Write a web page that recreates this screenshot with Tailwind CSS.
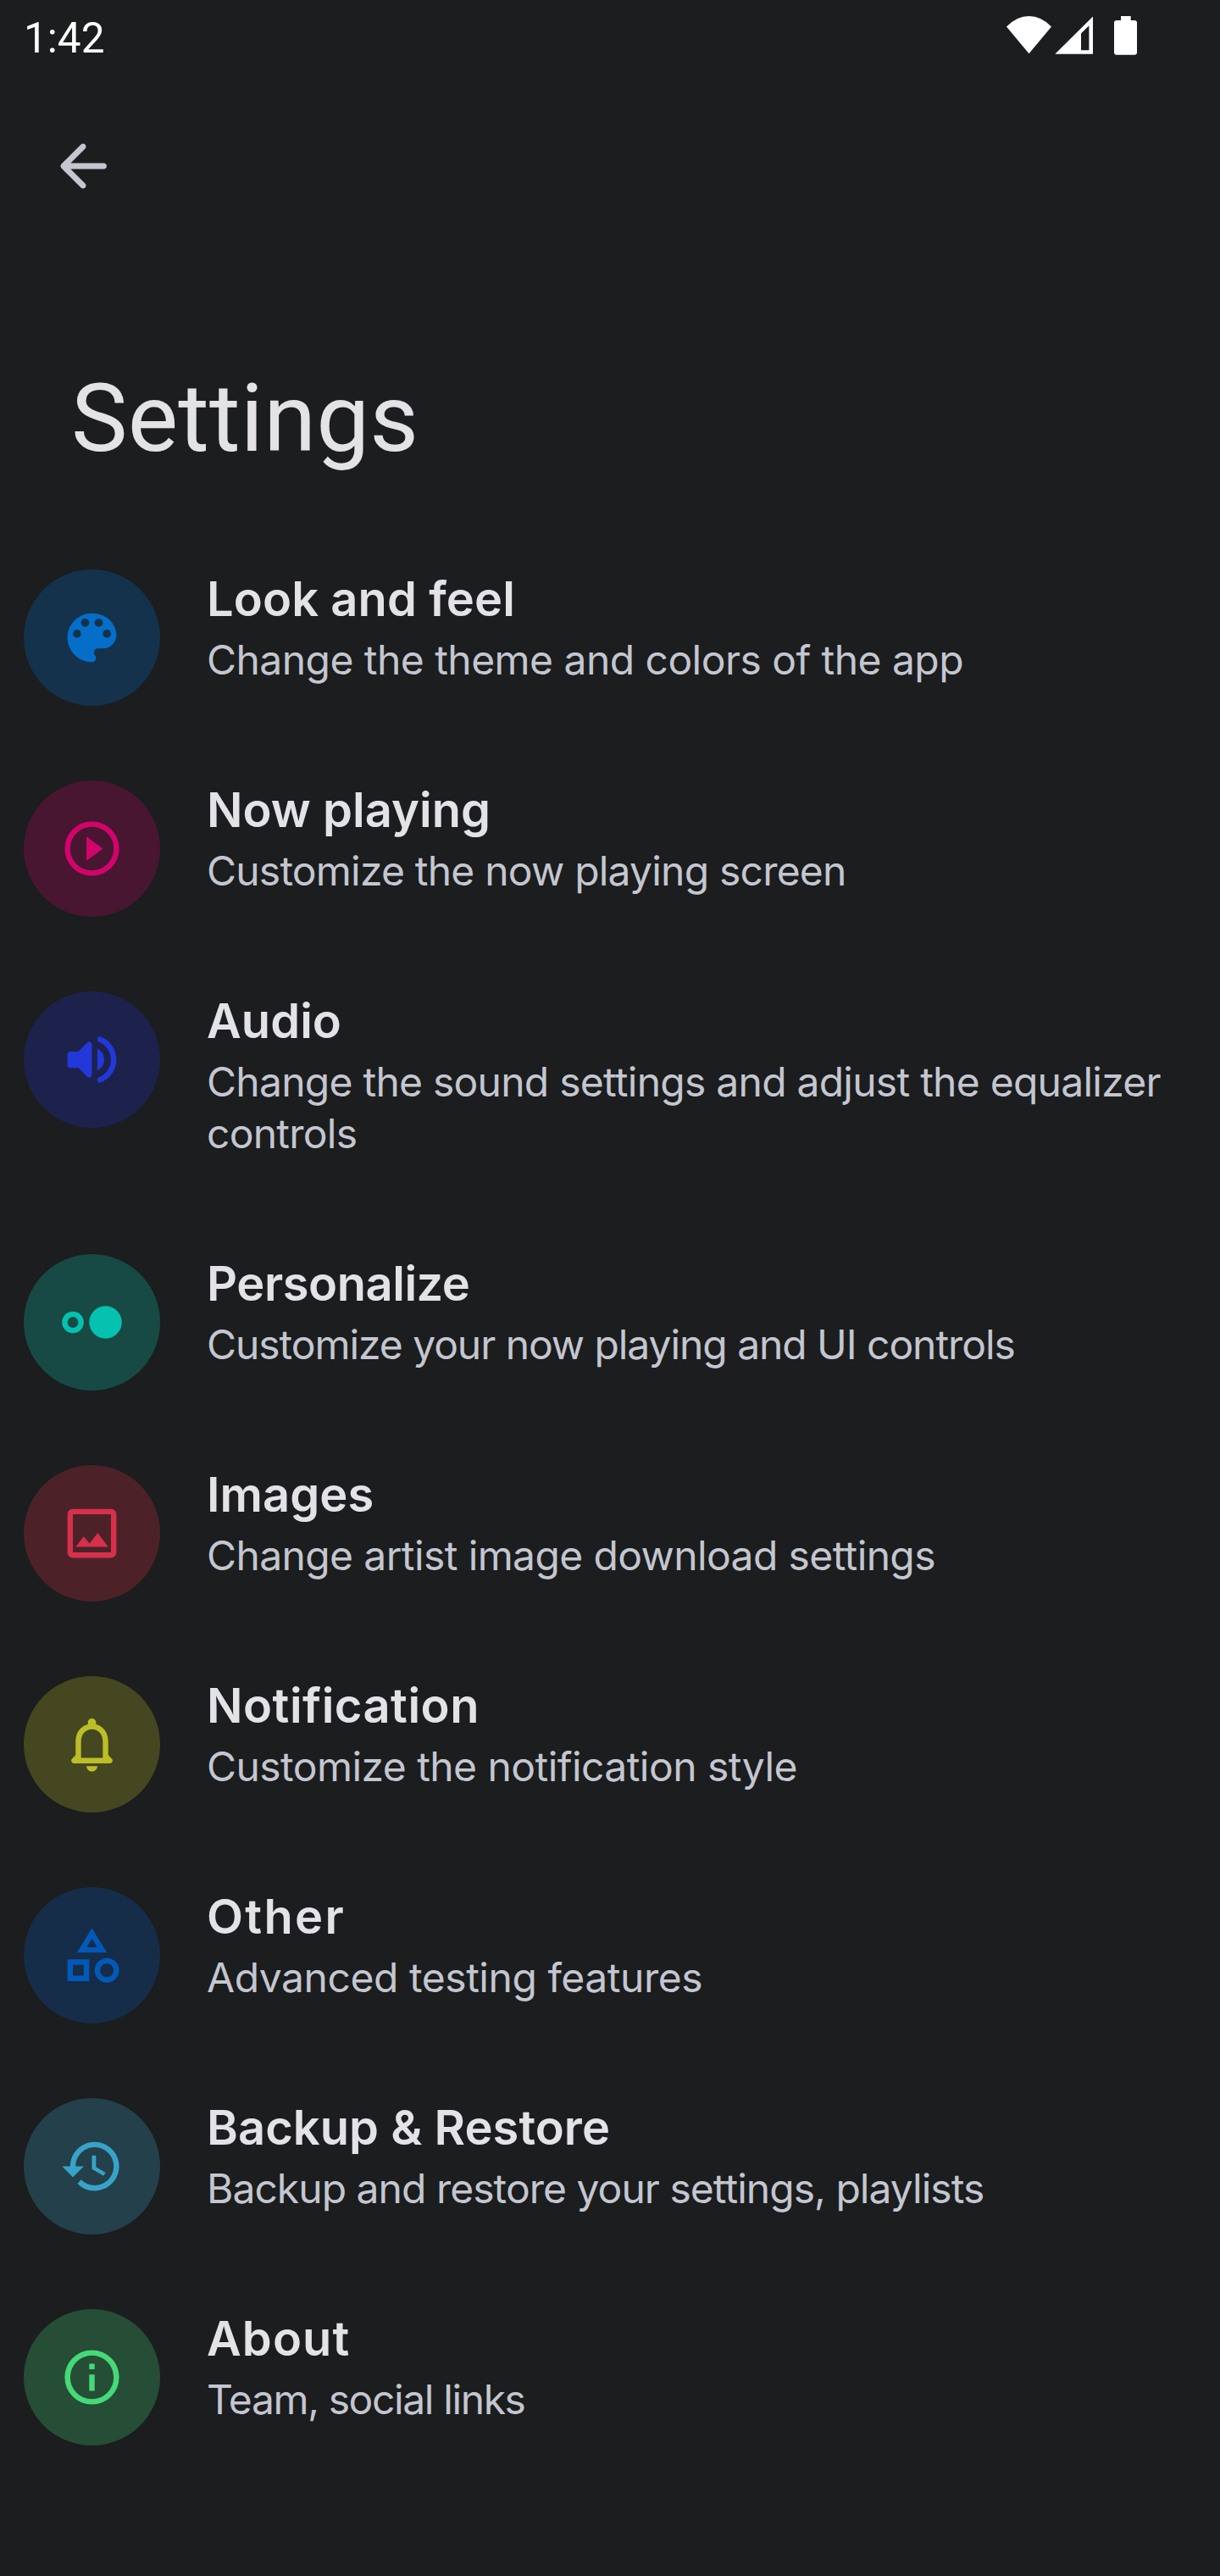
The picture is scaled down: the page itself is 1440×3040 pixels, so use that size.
<!DOCTYPE html>
<html lang="en">
<head>
<meta charset="utf-8">
<meta name="viewport" content="width=device-width, initial-scale=1">
<title>Settings</title>
<script src="https://cdn.jsdelivr.net/npm/@tailwindcss/browser@4"></script>
</head>
<body class="bg-[#1b1d1e]">
<div class="flex h-[3040px] w-[1440px] flex-col overflow-hidden bg-[#1b1d1e] font-['Inter',sans-serif] text-[#e3e2e6]">

  <!-- Status bar -->
  <header class="flex h-[84px] shrink-0 items-start justify-between pl-7 pr-[98px] pt-[15px] text-white">
    <span class="pt-px font-['Roboto',sans-serif] text-[49.500px] leading-[58px]">1:42</span>
    <svg class="mt-[3px] h-12 w-[154px]" viewBox="1188 18 154 48" fill="currentColor">
      <path d="M1188 31.500Q1200 19 1214.500 19T1241 31.500L1214.500 63.300Z"/>
      <path fill-rule="evenodd" d="M1290 19.500V63.700H1245.300ZM1285.400 30.300L1276 39.500V59.300H1285.400Z"/>
      <path d="M1323 19h11.700v5h4.300a3 3 0 0 1 3 3v34.700a3 3 0 0 1-3 3h-21a3 3 0 0 1-3-3V27a3 3 0 0 1 3-3h5z"/>
    </svg>
  </header>

  <!-- Toolbar -->
  <nav class="flex h-[224px] shrink-0 items-start pl-14 pt-[70px]">
    <button aria-label="Back" class="text-[#c4c6d0]">
      <svg class="size-[84px]" viewBox="0 0 24 24" fill="currentColor"><path d="M19 11H7.830l4.880-4.880c.39-.39.39-1.030 0-1.420-.39-.39-1.020-.39-1.410 0l-6.590 6.590c-.39.39-.39 1.020 0 1.410l6.590 6.590c.39.39 1.020.39 1.410 0 .39-.39.39-1.020 0-1.410L7.830 13H19c.55 0 1-.45 1-1s-.45-1-1-1z"/></svg>
    </button>
  </nav>

  <h1 class="h-[364px] shrink-0 pl-[84px] pt-[120px] font-['Roboto',sans-serif] text-[112px] leading-[132px] tracking-[0.15px]">Settings</h1>

  <!-- Preference categories -->
  <ul class="flex flex-col gap-22 pl-7">
    <li class="flex items-start gap-[55px]">
      <div class="flex size-[161px] shrink-0 items-center justify-center rounded-full bg-[#14324c] text-[#056ec8]">
        <svg class="size-[77px]" viewBox="0 0 24 24" fill="currentColor"><path d="M12 3c-4.970 0-9 4.030-9 9s4.030 9 9 9c.83 0 1.500-.67 1.500-1.500 0-.39-.15-.74-.39-1.010-.23-.26-.38-.61-.38-.99 0-.83.67-1.500 1.500-1.500H16c2.760 0 5-2.240 5-5 0-4.420-4.030-8-9-8zm-5.500 9c-.83 0-1.500-.67-1.500-1.500S5.670 9 6.500 9 8 9.670 8 10.500 7.330 12 6.500 12zm3-4C8.670 8 8 7.330 8 6.500S8.670 5 9.500 5s1.500.67 1.500 1.500S10.330 8 9.500 8zm5 0c-.83 0-1.500-.67-1.500-1.500S13.670 5 14.500 5s1.500.67 1.500 1.500S15.330 8 14.500 8zm3 4c-.83 0-1.500-.67-1.500-1.500S16.670 9 17.500 9s1.500.67 1.500 1.500-.67 1.500-1.500 1.500z"/></svg>
      </div>
      <div class="pb-6">
        <h2 class="pt-[2px] text-[56px] font-[640] leading-[67px] tracking-[0.1px]">Look and feel</h2>
        <p class="mt-[7px] text-[48px] leading-[61px] tracking-[-0.55px] text-[#c4c6d0]">Change the theme and colors of the app</p>
      </div>
    </li>
    <li class="flex items-start gap-[55px]">
      <div class="flex size-[161px] shrink-0 items-center justify-center rounded-full bg-[#481630] text-[#d1046b]">
        <svg class="size-[77px]" viewBox="0 0 24 24" fill="currentColor"><circle cx="12" cy="12" r="9" fill="none" stroke="currentColor" stroke-width="2"/><path d="M10 16.500l6-4.500-6-4.500z"/></svg>
      </div>
      <div class="pb-6">
        <h2 class="pt-[2px] text-[56px] font-[640] leading-[67px] tracking-[0.05px]">Now playing</h2>
        <p class="mt-[7px] text-[48px] leading-[61px] tracking-[-0.79px] text-[#c4c6d0]">Customize the now playing screen</p>
      </div>
    </li>
    <li class="flex items-start gap-[55px]">
      <div class="flex size-[161px] shrink-0 items-center justify-center rounded-full bg-[#1d224d] text-[#2338d9]">
        <svg class="size-[77px]" viewBox="0 0 24 24" fill="currentColor"><path d="M3 10v4c0 .55.45 1 1 1h3l3.290 3.290c.63.63 1.710.18 1.710-.71V6.410c0-.89-1.080-1.340-1.710-.71L7 9H4c-.55 0-1 .45-1 1zm13.500 2c0-1.770-1.020-3.290-2.500-4.030v8.050c1.480-.73 2.500-2.250 2.500-4.020zM14 4.450v.2c0 .38.25.71.6.85C17.180 6.530 19 9.060 19 12s-1.820 5.470-4.400 6.500c-.36.14-.6.47-.6.85v.2c0 .63.63 1.070 1.210.85C18.600 19.110 21 15.840 21 12s-2.400-7.110-5.790-8.400c-.58-.23-1.210.22-1.210.85z"/></svg>
      </div>
      <div class="pb-6">
        <h2 class="pt-[2px] text-[56px] font-[640] leading-[67px] tracking-[0.05px]">Audio</h2>
        <p class="mt-[7px] text-[48px] leading-[61px] tracking-[-0.75px] text-[#c4c6d0]">Change the sound settings and adjust the equalizer<br>controls</p>
      </div>
    </li>
    <li class="flex items-start gap-[55px]">
      <div class="flex size-[161px] shrink-0 items-center justify-center rounded-full bg-[#174a45] text-[#05c1b0]">
        <svg class="size-[77px]" viewBox="0 0 24 24" fill="currentColor"><circle cx="5" cy="12" r="3" fill="none" stroke="currentColor" stroke-width="2"/><circle cx="17" cy="12" r="6"/></svg>
      </div>
      <div class="pb-6">
        <h2 class="pt-[2px] text-[56px] font-[640] leading-[67px] tracking-[-0.45px]">Personalize</h2>
        <p class="mt-[7px] text-[48px] leading-[61px] tracking-[-1.06px] text-[#c4c6d0]">Customize your now playing and UI controls</p>
      </div>
    </li>
    <li class="flex items-start gap-[55px]">
      <div class="flex size-[161px] shrink-0 items-center justify-center rounded-full bg-[#4c2228] text-[#d7304a]">
        <svg class="size-[77px]" viewBox="0 0 24 24" fill="currentColor"><path d="M19 5v14H5V5h14m0-2H5c-1.100 0-2 .9-2 2v14c0 1.100.9 2 2 2h14c1.100 0 2-.9 2-2V5c0-1.100-.9-2-2-2zm-4.860 8.860l-3 3.870L9 13.140 6 17h12l-3.860-5.140z"/></svg>
      </div>
      <div class="pb-6">
        <h2 class="pt-[2px] text-[56px] font-[640] leading-[67px] tracking-[0.05px]">Images</h2>
        <p class="mt-[7px] text-[48px] leading-[61px] tracking-[-0.62px] text-[#c4c6d0]">Change artist image download settings</p>
      </div>
    </li>
    <li class="flex items-start gap-[55px]">
      <div class="flex size-[161px] shrink-0 items-center justify-center rounded-full bg-[#454720] text-[#bcbe28]">
        <svg class="size-[77px]" viewBox="0 0 24 24" fill="currentColor"><path d="M12 22c1.100 0 2-.9 2-2h-4c0 1.100.9 2 2 2zm6-6v-5c0-3.070-1.630-5.640-4.500-6.320V4c0-.83-.67-1.500-1.500-1.500s-1.500.67-1.500 1.500v.68C7.640 5.360 6 7.920 6 11v5l-1.290 1.290c-.63.63-.19 1.710.7 1.710h13.170c.89 0 1.340-1.080.71-1.710L18 16zm-2 1H8v-6c0-2.480 1.510-4.500 4-4.500s4 2.020 4 4.500v6z"/></svg>
      </div>
      <div class="pb-6">
        <h2 class="pt-[2px] text-[56px] font-[640] leading-[67px] tracking-[0.5px]">Notification</h2>
        <p class="mt-[7px] text-[48px] leading-[61px] tracking-[-0.56px] text-[#c4c6d0]">Customize the notification style</p>
      </div>
    </li>
    <li class="flex items-start gap-[55px]">
      <div class="flex size-[161px] shrink-0 items-center justify-center rounded-full bg-[#152d48] text-[#0259b8]">
        <svg class="size-[77px]" viewBox="0 0 24 24" fill="currentColor"><path d="M12 2l-5.500 9h11L12 2zm0 3.840L13.930 9h-3.870L12 5.840zM17.500 13c-2.490 0-4.500 2.010-4.500 4.500s2.010 4.500 4.500 4.500 4.500-2.010 4.500-4.500-2.010-4.500-4.500-4.500zm0 7c-1.380 0-2.500-1.120-2.500-2.500s1.120-2.500 2.500-2.500 2.500 1.120 2.500 2.500-1.120 2.500-2.500 2.500zM3 21.500h8v-8H3v8zm2-6h4v4H5v-4z"/></svg>
      </div>
      <div class="pb-6">
        <h2 class="pt-[2px] text-[56px] font-[640] leading-[67px] tracking-[2.3px]">Other</h2>
        <p class="mt-[7px] text-[48px] leading-[61px] tracking-[-0.46px] text-[#c4c6d0]">Advanced testing features</p>
      </div>
    </li>
    <li class="flex items-start gap-[55px]">
      <div class="flex size-[161px] shrink-0 items-center justify-center rounded-full bg-[#24404b] text-[#37a3c9]">
        <svg class="size-[77px]" viewBox="0 0 24 24" fill="currentColor"><path d="M13 3c-4.970 0-9 4.030-9 9H1l3.890 3.890.07.14L9 12H6c0-3.870 3.130-7 7-7s7 3.130 7 7-3.130 7-7 7c-1.930 0-3.680-.79-4.940-2.060l-1.420 1.420C8.270 19.990 10.510 21 13 21c4.970 0 9-4.030 9-9s-4.030-9-9-9zm-1 5v5l4.280 2.540.72-1.210-3.500-2.080V8H12z"/></svg>
      </div>
      <div class="pb-6">
        <h2 class="pt-[2px] text-[56px] font-[640] leading-[67px] tracking-[0.05px]">Backup &amp; Restore</h2>
        <p class="mt-[7px] text-[48px] leading-[61px] tracking-[-0.97px] text-[#c4c6d0]">Backup and restore your settings, playlists</p>
      </div>
    </li>
    <li class="flex items-start gap-[55px]">
      <div class="flex size-[161px] shrink-0 items-center justify-center rounded-full bg-[#264d36] text-[#45d978]">
        <svg class="size-[77px]" viewBox="0 0 24 24" fill="currentColor"><circle cx="12" cy="12" r="9" fill="none" stroke="currentColor" stroke-width="2"/><path d="M11 7h2v2h-2zM11 11h2v6h-2z"/></svg>
      </div>
      <div class="pb-6">
        <h2 class="pt-[2px] text-[56px] font-[640] leading-[67px] tracking-[1.1px]">About</h2>
        <p class="mt-[7px] text-[48px] leading-[61px] tracking-[-1.39px] text-[#c4c6d0]">Team, social links</p>
      </div>
    </li>
  </ul>
</div>
</body>
</html>
